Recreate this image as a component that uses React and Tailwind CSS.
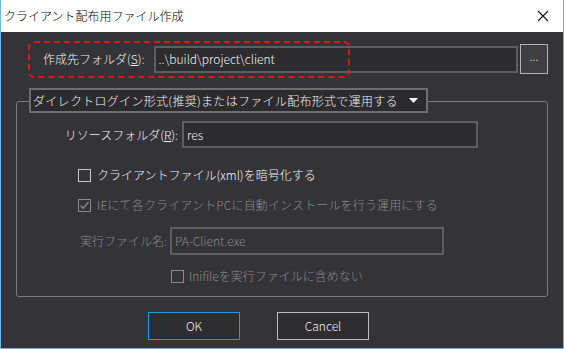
import React from 'react'

const jp = { fontFamily: '"Noto Sans CJK JP", "Noto Sans", sans-serif' }

function Check({ checked, disabled }) {
  return (
    <span
      className={`flex h-[13px] w-[13px] shrink-0 items-center justify-center border ${
        disabled ? 'border-[#8a8a8a]' : 'border-[#c8c8c8]'
      }`}
    >
      {checked && (
        <svg width="11" height="11" viewBox="0 0 11 11">
          <path d="M1.5 5.5 L4.2 8.2 L9.5 2" fill="none" stroke="#8a8a8a" strokeWidth="1.3" />
        </svg>
      )}
    </span>
  )
}

export default function App() {
  return (
    <div
      className="flex h-[349px] w-[564px] flex-col overflow-hidden border-x border-b border-[#74b3ea] bg-[#343438] text-[12px] font-light text-[#f2f2f2]"
      style={jp}
    >
      <div className="flex h-[32px] shrink-0 items-center justify-between bg-white pl-[3px] pr-[14px] text-[12px] text-black">
        <span>クライアント配布用ファイル作成</span>
        <svg width="12" height="12" viewBox="0 0 12 12">
          <path d="M1 1 L11 11 M11 1 L1 11" stroke="#111" strokeWidth="1.1" />
        </svg>
      </div>

      <div className="flex flex-col px-[15px]">
        <div className="relative mt-[12px] flex h-[30px] items-center">
          <div className="pointer-events-none absolute left-[12px] top-[-3px] h-[37px] w-[322px] rounded-[6px] border-2 border-dashed border-[#e8101a]" />
          <span className="ml-[27px] w-[110px]">
            作成先フォルダ(<span className="underline">S</span>):
          </span>
          <div className="ml-px flex h-[27px] w-[366px] items-center border-2 border-[#5e5e5e] bg-[#2c2c2f] px-[3px] text-[12px]">
            ..\build\project\client
          </div>
          <div className="ml-[2px] flex h-[30px] w-[28px] items-center justify-center border border-[#b4b4b4] bg-[#3e3e43] pb-[6px]">
            ...
          </div>
        </div>

        <div className="mt-[27px] flex flex-col rounded-[3px] border border-[#7c7c7c]">
          <div className="-mt-[14px] ml-[12px] flex h-[25px] w-[399px] items-center justify-between border-2 border-[#6e6e6e] bg-[#2b2b2e] pl-[2px] pr-[8px] tracking-[0.3px]">
            <span>ダイレクトログイン形式(推奨)またはファイル配布形式で運用する</span>
            <svg width="9" height="6" viewBox="0 0 9 6">
              <path d="M0 0 H9 L4.5 5 Z" fill="#fff" />
            </svg>
          </div>

          <div className="mt-[8px] flex h-[27px] items-center">
            <span className="w-[165px] pr-[4px] text-right">
              リソースフォルダ(<span className="underline">R</span>):
            </span>
            <div className="flex h-[27px] w-[296px] items-center border-2 border-[#5e5e5e] bg-[#2c2c2f] px-[3px]">
              res
            </div>
          </div>

          <div className="mt-[17px] flex h-[20px] items-center gap-[6px] pl-[61px]">
            <Check />
            <span>クライアントファイル(xml)を暗号化する</span>
          </div>

          <div className="mt-[10px] flex h-[20px] items-center gap-[6px] pl-[61px] tracking-[0.15px] text-[#8a8a8a]">
            <Check checked disabled />
            <span>IEにて各クライアントPCに自動インストールを行う運用にする</span>
          </div>

          <div className="mt-[12px] flex h-[28px] items-center text-[#8a8a8a]">
            <span className="w-[153px] pr-[3px] text-right">実行ファイル名:</span>
            <div className="flex h-[28px] w-[274px] items-center border-2 border-[#5e5e5e] px-[3px]">
              PA-Client.exe
            </div>
          </div>

          <div className="mb-[10px] mt-[11px] flex h-[20px] items-center gap-[5px] pl-[154px] text-[#8a8a8a]">
            <Check disabled />
            <span>Inifileを実行ファイルに含めない</span>
          </div>
        </div>

        <div className="mt-[15px] flex gap-[37px] pl-[132px]">
          <button className="h-[28px] w-[92px] border border-[#1b9cf0] bg-[#2d2d30] text-[12px]">OK</button>
          <button className="h-[28px] w-[92px] border border-[#bcbcbc] bg-[#2d2d30] text-[12px]">Cancel</button>
        </div>
      </div>
    </div>
  )
}
